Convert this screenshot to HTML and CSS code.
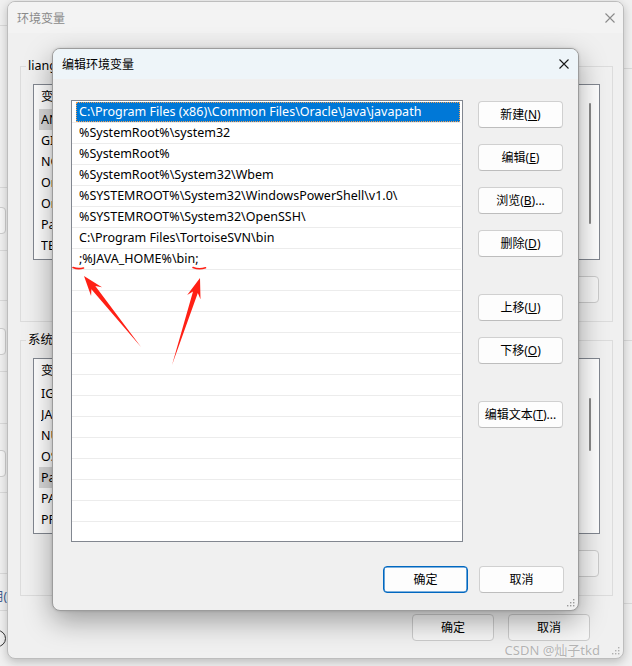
FILE: index.html
```html
<!DOCTYPE html>
<html lang="zh-CN">
<head>
<meta charset="utf-8">
<title>编辑环境变量</title>
<link rel="stylesheet" href="styles.css">
</head>
<body>
<div class="desk">
  <div class="bgwin">
    <div class="strip strip-left">
      <div class="hr m25"></div>
      <div class="hr m161"></div>
      <div class="bgbtn m19"></div>
      <div class="hr m16"></div>
      <div class="hr m49"></div>
      <div class="bgbtn m27"></div>
      <div class="hr m16"></div>
      <div class="hr m51"></div>
      <div class="bgbtn m26"></div>
      <div class="hr m15"></div>
      <div class="hr m80"></div>
      <div class="bgtext">使用(</div>
      <div class="hr m6"></div>
      <div class="bgcircle"></div>
    </div>
    <div class="strip strip-right">
      <div class="hr m68"></div>
      <div class="hr m271"></div>
      <div class="hr m262"></div>
    </div>
  </div>

  <section class="win back">
    <header class="titlebar back-title">
      <span>环境变量</span>
      <svg class="xicon" width="10" height="10" viewBox="0 0 10 10"><path d="M0.5 0.5L9.5 9.5M9.5 0.5L0.5 9.5" stroke="#8a8a8a" stroke-width="1.1"/></svg>
    </header>
    <div class="back-body">
      <fieldset class="group g1">
        <legend>liang 的用户变量(<u>U</u>)</legend>
        <div class="lv">
          <div class="lv-head"><span class="c1">变量</span><span class="c2">值</span></div>
          <div class="lv-row hl"><span class="c1">ANDROID_HOME</span><span class="c2">D:\Android\Sdk</span></div>
          <div class="lv-row"><span class="c1">GIT_HOME</span><span class="c2">C:\Program Files\Git</span></div>
          <div class="lv-row"><span class="c1">NODE_PATH</span><span class="c2">D:\nodejs\node_global</span></div>
          <div class="lv-row"><span class="c1">OneDrive</span><span class="c2">C:\Users\liang\OneDrive</span></div>
          <div class="lv-row"><span class="c1">OneDriveConsumer</span><span class="c2">C:\Users\liang\OneDrive</span></div>
          <div class="lv-row"><span class="c1">Path</span><span class="c2">C:\Program Files (x86)\Common Files</span></div>
          <div class="lv-row"><span class="c1">TEMP</span><span class="c2">%USERPROFILE%\AppData\Local\Temp</span></div>
          <div class="vscroll vs1"></div>
        </div>
        <div class="btnrow">
          <button class="btn bk">新建(<u>N</u>)...</button>
          <button class="btn bk">编辑(<u>E</u>)...</button>
          <button class="btn bk">删除(<u>D</u>)</button>
        </div>
      </fieldset>
      <fieldset class="group g2">
        <legend>系统变量(<u>S</u>)</legend>
        <div class="lv">
          <div class="lv-head"><span class="c1">变量</span><span class="c2">值</span></div>
          <div class="lv-row"><span class="c1">IGCCSVC_DB</span><span class="c2">AQAAANCMnd8BFdERjHoAwE</span></div>
          <div class="lv-row"><span class="c1">JAVA_HOME</span><span class="c2">D:\Java\jdk1.8.0</span></div>
          <div class="lv-row"><span class="c1">NUMBER_OF_PROCESSORS</span><span class="c2">16</span></div>
          <div class="lv-row"><span class="c1">OS</span><span class="c2">Windows_NT</span></div>
          <div class="lv-row hl"><span class="c1">Path</span><span class="c2">C:\Program Files (x86)\Common Files</span></div>
          <div class="lv-row"><span class="c1">PATHEXT</span><span class="c2">.COM;.EXE;.BAT;.CMD;.VBS</span></div>
          <div class="lv-row"><span class="c1">PROCESSOR_ARCHITECTURE</span><span class="c2">AMD64</span></div>
          <div class="vscroll vs2"></div>
        </div>
        <div class="btnrow">
          <button class="btn bk">新建(<u>W</u>)...</button>
          <button class="btn bk">编辑(<u>I</u>)...</button>
          <button class="btn bk">删除(<u>L</u>)</button>
        </div>
      </fieldset>
      <div class="back-foot">
        <button class="btn bk bf">确定</button>
        <button class="btn bk bf">取消</button>
      </div>
    </div>
    <svg class="grip grip-back" width="10" height="10" viewBox="0 0 10 10"><g fill="#b0b0b0"><rect x="7" y="1" width="1.4" height="1.4"/><rect x="7" y="4" width="1.4" height="1.4"/><rect x="4" y="4" width="1.4" height="1.4"/><rect x="7" y="7" width="1.4" height="1.4"/><rect x="4" y="7" width="1.4" height="1.4"/><rect x="1" y="7" width="1.4" height="1.4"/></g></svg>
  </section>

  <section class="win front">
    <header class="titlebar front-title">
      <span>编辑环境变量</span>
      <svg class="xicon" width="10" height="10" viewBox="0 0 10 10"><path d="M0.5 0.5L9.5 9.5M9.5 0.5L0.5 9.5" stroke="#1a1a1a" stroke-width="1.1"/></svg>
    </header>
    <div class="front-body">
      <div class="front-main">
        <div class="plist">
          <div class="prow sel"><span>C:\Program Files (x86)\Common Files\Oracle\Java\javapath</span></div>
          <div class="prow"><span>%SystemRoot%\system32</span></div>
          <div class="prow"><span>%SystemRoot%</span></div>
          <div class="prow"><span>%SystemRoot%\System32\Wbem</span></div>
          <div class="prow"><span>%SYSTEMROOT%\System32\WindowsPowerShell\v1.0\</span></div>
          <div class="prow"><span>%SYSTEMROOT%\System32\OpenSSH\</span></div>
          <div class="prow"><span>C:\Program Files\TortoiseSVN\bin</span></div>
          <div class="prow"><span>;%JAVA_HOME%\bin;</span></div>
          <div class="prow"><span></span></div>
          <div class="prow"><span></span></div>
          <div class="prow"><span></span></div>
          <div class="prow"><span></span></div>
          <div class="prow"><span></span></div>
          <div class="prow"><span></span></div>
          <div class="prow"><span></span></div>
          <div class="prow"><span></span></div>
          <div class="prow"><span></span></div>
          <div class="prow"><span></span></div>
          <div class="prow"><span></span></div>
          <div class="prow"><span></span></div>
          <div class="prow"><span></span></div>
          <div class="prow"><span></span></div>
        </div>
        <div class="side">
          <button class="btn sb first">新建(<u>N</u>)</button>
          <button class="btn sb gs">编辑(<u>E</u>)</button>
          <button class="btn sb gs">浏览(<u>B</u>)...</button>
          <button class="btn sb gs">删除(<u>D</u>)</button>
          <button class="btn sb gl">上移(<u>U</u>)</button>
          <button class="btn sb gs">下移(<u>O</u>)</button>
          <button class="btn sb gl">编辑文本(<u>T</u>)...</button>
        </div>
      </div>
      <div class="front-foot">
        <button class="btn sb default">确定</button>
        <button class="btn sb">取消</button>
      </div>
    </div>
    <svg class="grip grip-front" width="10" height="10" viewBox="0 0 10 10"><g fill="#9a9a9a"><rect x="7" y="1" width="1.4" height="1.4"/><rect x="7" y="4" width="1.4" height="1.4"/><rect x="4" y="4" width="1.4" height="1.4"/><rect x="7" y="7" width="1.4" height="1.4"/><rect x="4" y="7" width="1.4" height="1.4"/><rect x="1" y="7" width="1.4" height="1.4"/></g></svg>
  </section>

  <svg class="marks" width="632" height="666" viewBox="0 0 632 666">
    <g fill="none" stroke="#ff2015" stroke-width="1.6" stroke-linecap="round">
      <path d="M73 267.5 Q78 269.5 83.5 268"/>
      <path d="M193 267.5 Q199 269.8 205.5 267.8"/>
    </g>
    <g fill="#ff2015">
      <polygon points="84,276 91.1,296 91.4,289.3 141,347 95.3,286.1 102,287.2"/>
      <polygon points="200,278 187.2,294.9 193,291.5 172,365 197.8,293 200.5,299.2"/>
    </g>
  </svg>

  <div class="watermark">CSDN @灿子tkd</div>
</div>
</body>
</html>
```

FILE: styles.css
```css
* { box-sizing: border-box; }
html, body { margin: 0; padding: 0; }
body {
  width: 632px;
  height: 666px;
  overflow: hidden;
  background: #e9e9e9;
  font-family: "Segoe UI", "Noto Sans", "Noto Sans CJK SC", sans-serif;
  font-size: 12px;
  color: #000;
}
.desk { position: relative; width: 632px; height: 666px; overflow: hidden; }

/* window behind everything */
.bgwin {
  position: absolute; left: 0; top: 0; width: 632px; height: 666px;
  background: #f0f0f0;
  display: flex; justify-content: space-between;
}
.strip { display: flex; flex-direction: column; overflow: hidden; }
.strip-left { width: 8px; }
.strip-right { width: 10px; }
.hr { height: 1px; background: #dadada; flex: none; }
.m6 { margin-top: 6px; } .m15 { margin-top: 15px; } .m16 { margin-top: 16px; }
.m19 { margin-top: 19px; } .m25 { margin-top: 25px; } .m26 { margin-top: 26px; }
.m27 { margin-top: 27px; } .m49 { margin-top: 49px; } .m51 { margin-top: 51px; }
.m68 { margin-top: 68px; } .m80 { margin-top: 80px; } .m161 { margin-top: 161px; }
.m262 { margin-top: 262px; } .m271 { margin-top: 271px; }
.bgbtn {
  flex: none; width: 30px; height: 27px; margin-left: -24px;
  border: 1px solid #cdcdcd; border-radius: 4px; background: #f7f7f7;
}
.bgtext {
  flex: none; width: 40px; margin-left: -33px; margin-top: 16px;
  text-align: right; line-height: 14px; color: #3b5b8c; white-space: nowrap;
}
.bgcircle {
  flex: none; width: 17px; height: 17px; margin-left: -11px; margin-top: 19px;
  border: 1.5px solid #333; border-radius: 50%;
}

/* windows */
.win {
  position: absolute;
  background: #f0f0f0;
  border-radius: 8px;
  overflow: hidden;
  display: flex; flex-direction: column;
}
.back {
  left: 7px; top: 1px; width: 617px; height: 658px;
  border: 1px solid #bdbdbd;
  box-shadow: 0 3px 10px rgba(0,0,0,0.22);
}
.front {
  left: 52px; top: 48px; width: 527px; height: 563px;
  border: 1px solid #9c9c9c;
  box-shadow: 0 10px 28px rgba(0,0,0,0.35), 0 0 3px rgba(0,0,0,0.15);
}
.titlebar {
  flex: none; display: flex; align-items: center; justify-content: space-between;
}
.back-title { height: 31px; padding: 0 8px 0 9px; color: #8a8a8a; background: #f3f3f3; }
.front-title { height: 30px; padding: 0 9px 0 9px; color: #000; background: #eef5f9; }
.xicon { display: block; }

/* back dialog body */
.back-body { display: flex; flex-direction: column; padding-left: 12px; }
.group {
  margin: 0; width: 593px;
  border: 1px solid #dcdcdc;
  padding: 10px 12px 18px 12px;
  min-width: 0;
}
.g1 { margin-top: 25px; }
.g2 { margin-top: 10px; }
.group legend {
  margin-left: -7px; padding: 0 2px; line-height: 16px; font-size: 12.5px;
}
.lv {
  position: relative;
  height: 176px;
  border: 1px solid #828790;
  background: #fff;
  overflow: hidden;
  font-size: 12.5px;
}
.lv-head, .lv-row { display: flex; white-space: nowrap; }
.lv-head { height: 24px; line-height: 24px; padding-left: 7px; }
.lv-row { height: 21px; line-height: 21px; margin-left: 5px; padding-left: 2px; }
.lv-row.hl { background: #d9d9d9; width: 160px; }
.c1 { width: 158px; overflow: hidden; flex: none; }
.c2 { width: 360px; overflow: hidden; flex: none; }
.vscroll { position: absolute; right: 8px; width: 2px; background: #8a8a8a; border-radius: 1px; }
.vs1 { top: 18px; height: 121px; }
.vs2 { top: 39px; height: 53px; }

.btnrow { display: flex; justify-content: flex-end; gap: 10px; margin-top: 16px; padding-right: 1px; }
.back-foot { display: flex; justify-content: flex-end; gap: 14px; margin-top: 18px; padding-right: 33px; }

/* buttons */
.btn {
  font: inherit; color: #000;
  height: 27px; padding: 0;
  background: #fdfdfd;
  border: 1px solid #d0d0d0;
  border-bottom-color: #bdbdbd;
  border-radius: 4px;
  text-align: center;
  line-height: 25px;
  white-space: nowrap;
}
.btn u { text-underline-offset: 1px; }
.bk { width: 82px; background: #f6f6f6; border-color: #cbcbcb; }
.sb { width: 85px; flex: none; }
.default { border: 1px solid #0067c0; box-shadow: inset 0 0 0 0.6px #0067c0; background: #fdfdfd; }

/* front dialog body */
.front-body { display: flex; flex-direction: column; padding: 21px 14px 0 18px; }
.front-main { display: flex; gap: 15px; }
.plist {
  width: 392px; height: 442px; flex: none;
  border: 1px solid #828790; background: #fff;
  padding: 1px 1px 0 0;
  overflow: hidden;
  font-size: 12.5px;
}
.prow {
  height: 21px; border-bottom: 1px solid #ececec;
  padding: 0 1px 0 4px;
}
.prow span {
  display: block; height: 20px; line-height: 20px; padding-left: 3px;
  white-space: nowrap; overflow: hidden;
}
.prow.sel span {
  background: #0078d7; color: #fff;
  outline: 1px dotted #f5a050; outline-offset: -1px;
}
.side { display: flex; flex-direction: column; }
.side .first { margin-top: 1px; }
.side .gs { margin-top: 16px; }
.side .gl { margin-top: 37px; }
.front-foot { display: flex; justify-content: flex-end; gap: 11px; margin-top: 24px; }

.grip { position: absolute; right: 2px; bottom: 2px; }

/* annotations */
.marks { position: absolute; left: 0; top: 0; pointer-events: none; }
.watermark {
  position: absolute; right: 32px; top: 642px;
  font-size: 13px; line-height: 17px;
  color: rgba(160,160,160,0.8);
  text-shadow: 0 0 1px rgba(255,255,255,0.9);
  font-family: "Noto Sans", "Noto Sans CJK SC", sans-serif;
}
```
